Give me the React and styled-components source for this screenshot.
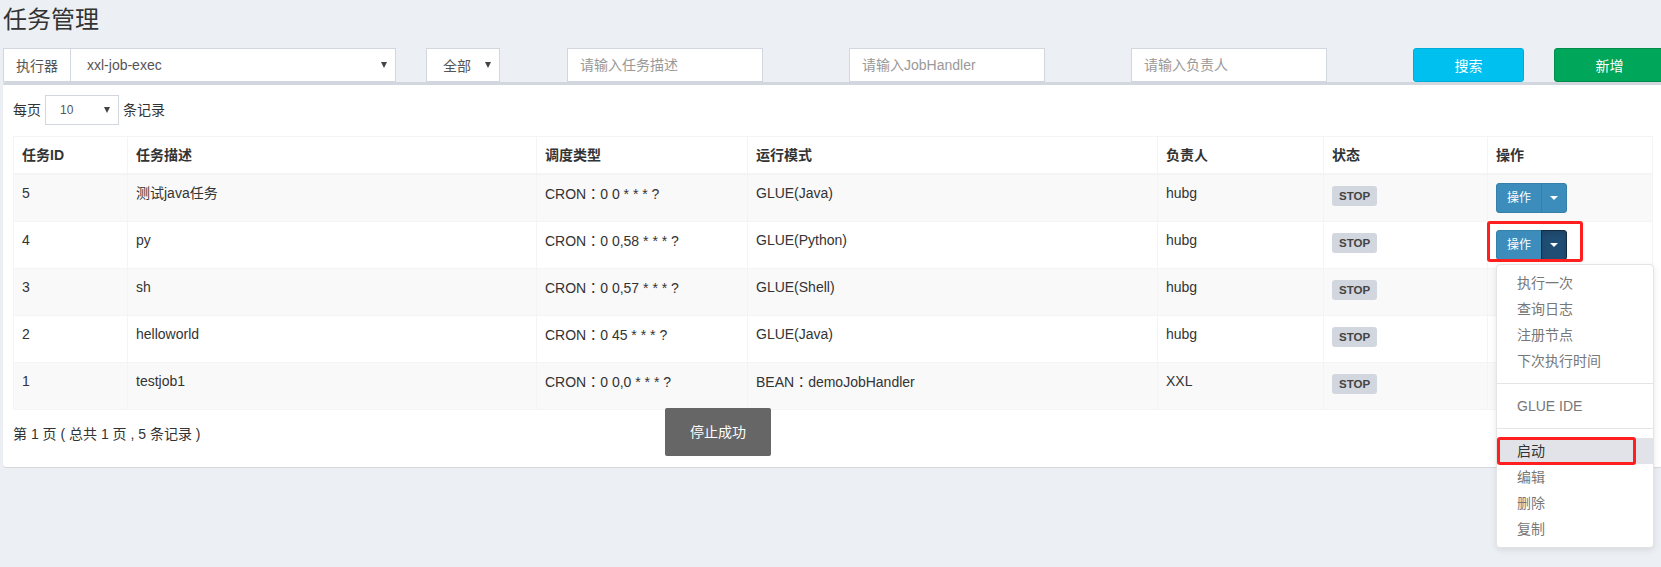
import React from "react";
import styled, { createGlobalStyle } from "styled-components";

const GlobalStyle = createGlobalStyle`
  html, body {
    margin: 0;
    padding: 0;
    background: #ecf0f5;
  }
  body {
    font-family: "Liberation Sans", "Noto Sans CJK SC", sans-serif;
    font-size: 14px;
    color: #333;
  }
  * {
    box-sizing: border-box;
  }
`;

const Page = styled.div`
  position: relative;
  width: 1661px;
  height: 567px;
  padding-left: 3px;
  overflow: hidden;
`;

const Title = styled.h1`
  margin: 0;
  padding-top: 5px;
  font-size: 24px;
  line-height: 30px;
  font-weight: normal;
  color: #333;
`;

const FilterRow = styled.div`
  display: grid;
  grid-template-columns: 423px 141px 282px 282px 282px 141px 141px;
  margin: 13px -15px 0;
  height: 34px;
`;

const Col = styled.div`
  padding: 0 15px;
`;

const InputGroup = styled.div`
  display: flex;
  height: 34px;
`;

const Addon = styled.span`
  display: flex;
  align-items: center;
  padding: 0 12px;
  border: 1px solid #d2d6de;
  border-right: 0;
  background: #fff;
  color: #555;
`;

const SelectBox = styled.div`
  display: flex;
  align-items: center;
  justify-content: space-between;
  flex: ${(p) => (p.$width ? "none" : "1")};
  width: ${(p) => (p.$width ? `${p.$width}px` : "auto")};
  height: ${(p) => p.$height || 34}px;
  padding: 0 8px 0 ${(p) => p.$indent || 16}px;
  border: 1px solid #d2d6de;
  background: #fff;
  color: #555;
  font-size: ${(p) => p.$size || 14}px;
`;

const Caret = styled.span`
  width: 0;
  height: 0;
  border-left: 3.5px solid transparent;
  border-right: 3.5px solid transparent;
  border-top: 6px solid #444;
`;

const TextInput = styled.input`
  display: block;
  width: 196px;
  height: 34px;
  padding: 6px 12px;
  border: 1px solid #d2d6de;
  border-radius: 0;
  background: #fff;
  font: inherit;
  color: #555;
  outline: none;
  &::placeholder {
    color: #999;
  }
`;

const Button = styled.div`
  display: flex;
  align-items: center;
  justify-content: center;
  height: 34px;
  border-radius: 3px;
  color: #fff;
  background: ${(p) => (p.$variant === "success" ? "#00a65a" : "#00c0ef")};
  border: 1px solid ${(p) => (p.$variant === "success" ? "#008d4c" : "#00acd6")};
`;

const Box = styled.div`
  position: relative;
  width: 1659px;
  background: #fff;
  border-top: 3px solid #d2d6de;
  border-radius: 3px;
  box-shadow: 0 1px 1px rgba(0, 0, 0, 0.1);
  padding: 10px;
`;

const LengthRow = styled.div`
  display: flex;
  align-items: center;
  gap: 4px;
  height: 30px;
  line-height: 20px;
`;

const Table = styled.table`
  margin-top: 11px;
  width: 1639px;
  table-layout: fixed;
  border-collapse: collapse;
  line-height: 20px;
`;

const Th = styled.th`
  text-align: left;
  font-weight: bold;
  padding: 8px;
  border: 1px solid #f4f4f4;
  border-bottom-width: 2px;
`;

const Tr = styled.tr`
  background: ${(p) => (p.$striped ? "#f9f9f9" : "#fff")};
`;

const Td = styled.td`
  padding: 8px;
  vertical-align: top;
  border: 1px solid #f4f4f4;
  white-space: nowrap;
`;

const Colon = styled.span`
  font-family: "Noto Sans CJK TC", sans-serif;
`;

const Label = styled.span`
  display: inline-block;
  margin-top: 3px;
  padding: 0 7px;
  line-height: 20px;
  border-radius: 3px;
  background: #d2d6de;
  color: #444;
  font-size: 11.5px;
  font-weight: bold;
`;

const BtnGroup = styled.div`
  position: relative;
  display: inline-flex;
  vertical-align: top;
`;

const OpBtn = styled.div`
  height: 30px;
  padding: 0 10px;
  display: flex;
  align-items: center;
  font-size: 12px;
  color: #fff;
  background: #3c8dbc;
  border: 1px solid #367fa9;
  border-radius: 3px 0 0 3px;
`;

const CaretBtn = styled.div`
  width: 26px;
  height: 30px;
  display: flex;
  align-items: center;
  justify-content: center;
  margin-left: -1px;
  background: ${(p) => (p.$active ? "#204d74" : "#3c8dbc")};
  border: 1px solid ${(p) => (p.$active ? "#122b40" : "#367fa9")};
  border-radius: 0 3px 3px 0;
  box-shadow: ${(p) => (p.$active ? "inset 0 3px 5px rgba(0,0,0,0.125)" : "none")};
`;

const WhiteCaret = styled.span`
  width: 0;
  height: 0;
  border-left: 4px solid transparent;
  border-right: 4px solid transparent;
  border-top: 4px solid #fff;
`;

const Marker = styled.div`
  position: absolute;
  left: ${(p) => p.$left}px;
  top: ${(p) => p.$top}px;
  width: ${(p) => p.$w}px;
  height: ${(p) => p.$h}px;
  border: 3px solid #ff1f1f;
  border-radius: 3px;
  pointer-events: none;
  z-index: 30;
`;

const Menu = styled.ul`
  position: absolute;
  top: 100%;
  left: 0;
  z-index: 20;
  margin: 4px 0 0;
  padding: 5px 0;
  width: 158px;
  list-style: none;
  background: #fff;
  border: 1px solid #e4e4e4;
  border-radius: 4px;
  box-shadow: 0 2px 6px rgba(0, 0, 0, 0.1);
  font-size: 14px;
`;

const MenuItem = styled.li`
  position: relative;
  padding: 3px 20px;
  line-height: 20px;
  white-space: nowrap;
  color: ${(p) => (p.$active ? "#333" : "#777")};
  background: ${(p) => (p.$active ? "#e1e3e9" : "transparent")};
`;

const Divider = styled.li`
  height: 1px;
  margin: 9px 0;
  background: #e5e5e5;
`;

const Footer = styled.div`
  padding: 14px 0 13px;
  line-height: 20px;
`;

const Toast = styled.div`
  position: absolute;
  left: 662px;
  top: 323px;
  width: 106px;
  height: 48px;
  line-height: 48px;
  text-align: center;
  border-radius: 2px;
  background: #666;
  color: #fff;
  z-index: 15;
`;

const columns = [
  { name: "任务ID", width: 114 },
  { name: "任务描述", width: 409 },
  { name: "调度类型", width: 211 },
  { name: "运行模式", width: 410 },
  { name: "负责人", width: 166 },
  { name: "状态", width: 164 },
  { name: "操作", width: 165 },
];

const jobs = [
  { id: 5, desc: "测试java任务", cron: "0 0 * * * ?", type: "GLUE", mode: "(Java)", owner: "hubg" },
  { id: 4, desc: "py", cron: "0 0,58 * * * ?", type: "GLUE", mode: "(Python)", owner: "hubg", open: true },
  { id: 3, desc: "sh", cron: "0 0,57 * * * ?", type: "GLUE", mode: "(Shell)", owner: "hubg" },
  { id: 2, desc: "helloworld", cron: "0 45 * * * ?", type: "GLUE", mode: "(Java)", owner: "hubg" },
  { id: 1, desc: "testjob1", cron: "0 0,0 * * * ?", type: "BEAN", mode: "demoJobHandler", owner: "XXL" },
];

const OpsMenu = () => (
  <Menu>
    <MenuItem>执行一次</MenuItem>
    <MenuItem>查询日志</MenuItem>
    <MenuItem>注册节点</MenuItem>
    <MenuItem>下次执行时间</MenuItem>
    <Divider />
    <MenuItem>GLUE IDE</MenuItem>
    <Divider />
    <MenuItem $active>
      启动
      <Marker $left={0} $top={-1} $w={139} $h={28} />
    </MenuItem>
    <MenuItem>编辑</MenuItem>
    <MenuItem>删除</MenuItem>
    <MenuItem>复制</MenuItem>
  </Menu>
);

const App = () => {
  return (
    <Page>
      <GlobalStyle />
      <Title>任务管理</Title>
      <FilterRow>
        <Col>
          <InputGroup>
            <Addon>执行器</Addon>
            <SelectBox>
              xxl-job-exec
              <Caret />
            </SelectBox>
          </InputGroup>
        </Col>
        <Col>
          <SelectBox $width={74}>
            全部
            <Caret />
          </SelectBox>
        </Col>
        <Col>
          <TextInput placeholder="请输入任务描述" />
        </Col>
        <Col>
          <TextInput placeholder="请输入JobHandler" />
        </Col>
        <Col>
          <TextInput placeholder="请输入负责人" />
        </Col>
        <Col>
          <Button>搜索</Button>
        </Col>
        <Col>
          <Button $variant="success">新增</Button>
        </Col>
      </FilterRow>

      <Box>
        <LengthRow>
          每页
          <SelectBox $width={74} $height={30} $indent={14} $size={12}>
            10
            <Caret />
          </SelectBox>
          条记录
        </LengthRow>

        <Table>
          <colgroup>
            {columns.map((c) => (
              <col key={c.name} style={{ width: c.width }} />
            ))}
          </colgroup>
          <thead>
            <tr>
              {columns.map((c) => (
                <Th key={c.name}>{c.name}</Th>
              ))}
            </tr>
          </thead>
          <tbody>
            {jobs.map((job, i) => (
              <Tr key={job.id} $striped={i % 2 === 0}>
                <Td>{job.id}</Td>
                <Td>{job.desc}</Td>
                <Td>
                  CRON<Colon>：</Colon>
                  {job.cron}
                </Td>
                <Td>
                  {job.type === "BEAN" ? (
                    <>
                      BEAN<Colon>：</Colon>
                      {job.mode}
                    </>
                  ) : (
                    `GLUE${job.mode}`
                  )}
                </Td>
                <Td>{job.owner}</Td>
                <Td>
                  <Label>STOP</Label>
                </Td>
                <Td>
                  <BtnGroup>
                    <OpBtn>操作</OpBtn>
                    <CaretBtn $active={job.open}>
                      <WhiteCaret />
                    </CaretBtn>
                    {job.open && (
                      <>
                        <Marker $left={-9} $top={-9} $w={96} $h={41} />
                        <OpsMenu />
                      </>
                    )}
                  </BtnGroup>
                </Td>
              </Tr>
            ))}
          </tbody>
        </Table>

        <Footer>第 1 页 ( 总共 1 页 , 5 条记录 )</Footer>
        <Toast>停止成功</Toast>
      </Box>
    </Page>
  );
};

export default App;
